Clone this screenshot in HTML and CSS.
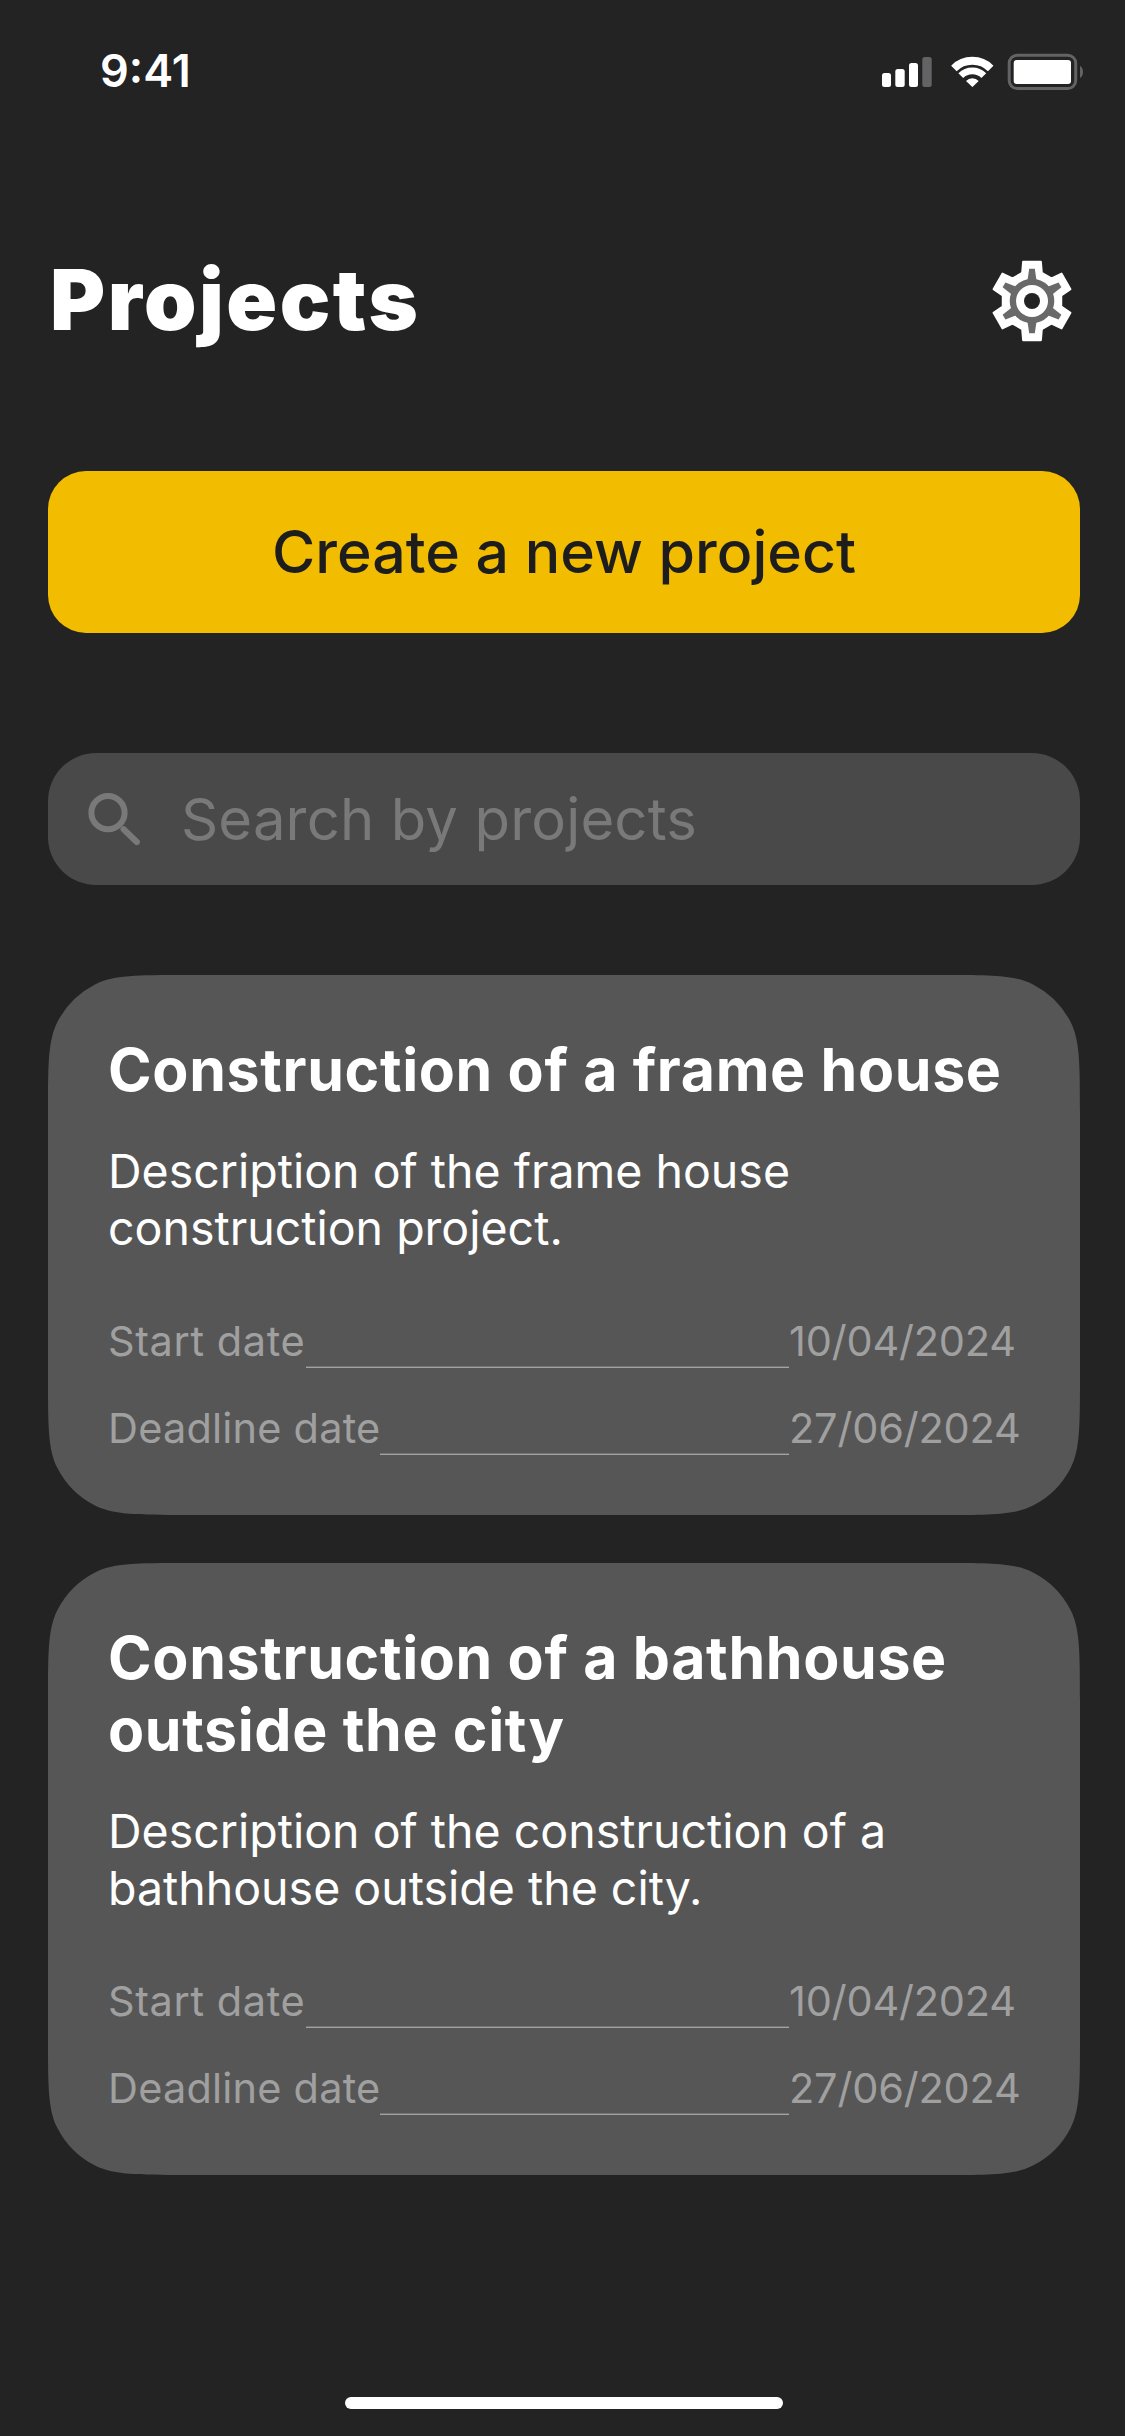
FILE: index.html
```html
<!DOCTYPE html>
<html lang="en">
<head>
<meta charset="utf-8">
<title>Projects</title>
<link rel="stylesheet" href="styles.css">
</head>
<body>
<div class="screen">
  <div class="status-bar">
    <span class="time">9:41</span>
    <svg class="status-icons" viewBox="882 53 201 38" fill="#fff">
      <rect x="882" y="73" width="9" height="14" rx="2.5"/>
      <rect x="895.3" y="69" width="9.4" height="18" rx="2.5"/>
      <rect x="909" y="63" width="9" height="24" rx="2.5"/>
      <rect x="922.3" y="57" width="9.4" height="30" rx="2.5" fill="#636365"/>
      <g fill="none" stroke="#fff">
        <path stroke-width="7.8" d="M953.9 68.4a26 26 0 0 1 36.8 0"/>
        <path stroke-width="6.8" d="M960.8 75.6a16.3 16.3 0 0 1 23 0"/>
      </g>
      <path d="M966 80.9a9 9 0 0 1 12.7 0L973 86.6q-.6.6-1.2 0Z"/>
      <rect x="1009.2" y="55.2" width="66.5" height="33.4" rx="8" fill="none" stroke="#636365" stroke-width="3"/>
      <rect x="1013.7" y="60" width="57.3" height="24" rx="3"/>
      <path fill="#636365" d="M1080 65.7q3 2 3 6.2t-3 6.1Z"/>
    </svg>
  </div>

  <header class="header">
    <h1 class="page-title">Projects</h1>
    <svg class="gear" viewBox="-40 -41 80 82">
      <defs>
        <path id="tooth" d="M0 0-9.9-28.2-9-39.3H9L9.9-28.2 19.5-22.6Z"/>
        <path id="spoke" d="M-4.6-20-2.8-32.3H2.8L4.6-20Z"/>
      </defs>
      <g fill="#fff" stroke="#fff" stroke-width="1.8" stroke-linejoin="round">
        <use href="#tooth"/><use href="#tooth" transform="rotate(60)"/><use href="#tooth" transform="rotate(120)"/>
        <use href="#tooth" transform="rotate(180)"/><use href="#tooth" transform="rotate(240)"/><use href="#tooth" transform="rotate(300)"/>
      </g>
      <g fill="#696969">
        <circle r="22.3"/>
        <use href="#spoke"/><use href="#spoke" transform="rotate(60)"/><use href="#spoke" transform="rotate(120)"/>
        <use href="#spoke" transform="rotate(180)"/><use href="#spoke" transform="rotate(240)"/><use href="#spoke" transform="rotate(300)"/>
      </g>
      <circle r="16" fill="#fff"/>
      <circle r="8" fill="#232323"/>
    </svg>
  </header>

  <button class="create">Create a new project</button>

  <div class="search">
    <svg class="search-icon" viewBox="88 793 52 53" fill="none" stroke="#797979" stroke-linecap="round">
      <circle cx="108" cy="812.7" r="16.6" stroke-width="6"/>
      <path d="M123.6 829.3 136.8 842" stroke-width="6.2"/>
    </svg>
    <span class="placeholder">Search by projects</span>
  </div>

  <main class="projects">
    <article class="card card-short">
      <h2 class="card-title">Construction of a frame house</h2>
      <p class="card-text">Description of the frame house<br>construction project.</p>
      <div class="dates">
        <div class="date-row"><span class="label label-start">Start date</span><i class="rule"></i><span class="date">10/04/2024</span></div>
        <div class="date-row"><span class="label">Deadline date</span><i class="rule"></i><span class="date">27/06/2024</span></div>
      </div>
    </article>
    <article class="card card-tall">
      <h2 class="card-title">Construction of a bathhouse<br>outside the city</h2>
      <p class="card-text">Description of the construction of a<br>bathhouse outside the city.</p>
      <div class="dates">
        <div class="date-row"><span class="label label-start">Start date</span><i class="rule"></i><span class="date">10/04/2024</span></div>
        <div class="date-row"><span class="label">Deadline date</span><i class="rule"></i><span class="date">27/06/2024</span></div>
      </div>
    </article>
  </main>

  <div class="home-indicator"></div>
</div>
</body>
</html>
```
FILE: styles.css
```css
* { box-sizing: border-box; margin: 0; padding: 0; }

body {
  background: #232323;
  color: #fff;
  font-family: Inter, "Liberation Sans", sans-serif;
}

.screen {
  width: 1125px;
  height: 2436px;
  padding: 0 45px 27px 48px;
  display: flex;
  flex-direction: column;
  background: #232323;
}

.status-bar {
  height: 132px;
  padding: 43px 0 0 52px;
  margin-right: -3px;
  display: flex;
  justify-content: space-between;
  align-items: flex-start;
}

.time {
  margin-top: 1px;
  font-size: 45px;
  line-height: 54px;
  font-weight: 600;
  letter-spacing: 0;
}

.status-icons { width: 201px; height: 38px; margin-top: 10px; }

.header {
  height: 339px;
  padding: 0 8px 0 2px;
  display: flex;
  justify-content: space-between;
}

.page-title {
  margin-top: 118px;
  font-size: 84px;
  line-height: 100px;
  font-weight: 900;
  letter-spacing: 2.5px;
}

.gear { width: 80px; height: 82px; margin-top: 128px; }

.create, .search, .card { width: 1032px; flex: none; }

.create {
  height: 162px;
  padding-bottom: 2px;
  border: 0;
  border-radius: 38px;
  background: #f2bc00;
  color: #1d1d1d;
  font-family: inherit;
  font-size: 59px;
  font-weight: 500;
  text-align: center;
}

.search {
  height: 132px;
  margin-top: 120px;
  padding-left: 40px;
  border-radius: 48px;
  background: #494949;
  display: flex;
  align-items: center;
  gap: 41px;
}

.search-icon { width: 52px; height: 53px; }

.placeholder {
  color: #797979;
  font-size: 58px;
  letter-spacing: 0.15px;
}

.projects {
  margin-top: 90px;
  display: flex;
  flex-direction: column;
  gap: 48px;
}

.card {
  padding: 59px 60px 60px;
  background: #565656;
}

/* Corners with a continuous curve (86px radius, smoothed) */
.card-short { clip-path: path("M137.6 0H894.4C942.6 0 966.6 0 985 9.4A86 86 0 0 1 1022.6 47C1032 65.4 1032 89.4 1032 137.6V402.4C1032 450.6 1032 474.6 1022.6 493A86 86 0 0 1 985 530.6C966.6 540 942.6 540 894.4 540H137.6C89.4 540 65.4 540 47 530.6A86 86 0 0 1 9.4 493C0 474.6 0 450.6 0 402.4V137.6C0 89.4 0 65.4 9.4 47A86 86 0 0 1 47 9.4C65.4 0 89.4 0 137.6 0Z"); }
.card-tall { clip-path: path("M137.6 0H894.4C942.6 0 966.6 0 985 9.4A86 86 0 0 1 1022.6 47C1032 65.4 1032 89.4 1032 137.6V474.4C1032 522.6 1032 546.6 1022.6 565A86 86 0 0 1 985 602.6C966.6 612 942.6 612 894.4 612H137.6C89.4 612 65.4 612 47 602.6A86 86 0 0 1 9.4 565C0 546.6 0 522.6 0 474.4V137.6C0 89.4 0 65.4 9.4 47A86 86 0 0 1 47 9.4C65.4 0 89.4 0 137.6 0Z"); }

.card-title {
  font-size: 59px;
  line-height: 72px;
  font-weight: 700;
  letter-spacing: 0.65px;
  white-space: nowrap;
}

.card-text {
  margin-top: 37px;
  font-size: 46.5px;
  line-height: 57px;
  white-space: nowrap;
}

.dates {
  margin-top: 57px;
  display: flex;
  flex-direction: column;
  gap: 33px;
  color: #a0a0a0;
  font-size: 41.5px;
  line-height: 54px;
  letter-spacing: 0.2px;
}

.date-row { height: 54px; display: flex; align-items: flex-start; }
.label, .date { white-space: nowrap; }
.label-start { width: 198px; letter-spacing: 0.6px; }
.date { width: 231px; letter-spacing: -0.2px; }

.rule {
  flex: 1;
  height: 2px;
  align-self: flex-end;
  border-top: 1px solid #747474;
  border-bottom: 1px solid #a2a2a2;
}

.home-indicator {
  width: 438px;
  height: 12px;
  margin-top: auto;
  margin-left: 297px;
  border-radius: 6px;
  background: #fff;
}
```
